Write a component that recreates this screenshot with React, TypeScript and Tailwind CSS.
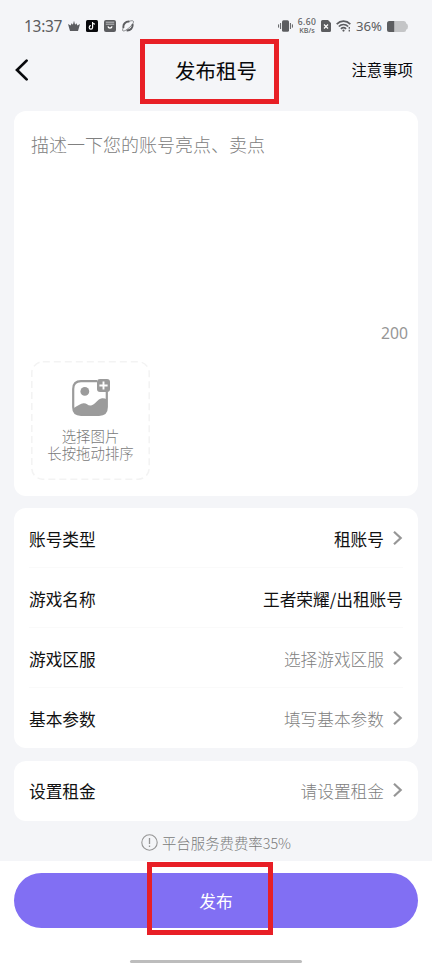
import { useState } from "react"

interface RowProps {
    label: string;
    value: string;
    filled?: boolean;
    arrow?: boolean;
    divider?: boolean;
}

function Chevron() {
    return (
        <svg className="-mt-[3px] ml-2 h-4 w-[11px] shrink-0" viewBox="0 0 11 16" fill="none" stroke="#969696" strokeWidth="2.2">
            <path d="M2 1.8 8.7 8 2 14.2" />
        </svg>
    )
}

function Row({ label, value, filled, arrow = true, divider }: RowProps) {
    return (
        <div className={`flex h-[60px] items-center justify-between text-[16.7px] ${divider ? "border-b border-[#fafafa] pt-[5px]" : "pt-[3px]"}`}>
            <span className="text-[#111111]">{label}</span>
            <div className="flex items-center">
                <span className={filled ? "text-[#111111]" : "font-light text-[#808080]"}>{value}</span>
                {arrow && <Chevron />}
            </div>
        </div>
    )
}

function StatusBar() {
    return (
        <div className="flex h-[39px] shrink-0 items-end justify-between pl-6 pr-[24px] text-[#5c5d60]">
            <div className="flex h-[26px] items-center">
                <span className="w-[38px] font-['Noto_Sans'] text-[15.5px] leading-[26px] tracking-[-0.3px]">13:37</span>
                {/* crown */}
                <svg className="ml-[6px] h-3 w-3" viewBox="0 0 12 12" fill="currentColor">
                    <path d="M2 11 0 4l2.6 1.6L3.6 3.200l1.300 1.600L6 .8l1.100 4 1.300-1.600 1 2.400L12 4l-2 7Z" />
                </svg>
                {/* music note */}
                <svg className="ml-[6px] h-3 w-3" viewBox="0 0 12 12">
                    <rect width="12" height="12" rx="1.5" fill="#08090c" />
                    <path d="M6.6 2v5.4a1.7 1.7 0 1 1-1.7-1.7M6.6 2c.2 1.4 1 2.1 2.4 2.2" fill="none" stroke="#fff" strokeWidth="1.2" />
                </svg>
                {/* shop bag */}
                <svg className="ml-[6px] h-3 w-3" viewBox="0 0 12 12">
                    <rect width="12" height="12" rx="2" fill="currentColor" />
                    <path d="M1.8 2.2h8.4M1.8 4.2h8.4" fill="none" stroke="#d5d6d9" strokeWidth=".8" />
                    <path d="M4 6.4c.4 2.2 3.6 2.2 4 0" fill="none" stroke="#fff" strokeWidth="1.3" />
                </svg>
                {/* planet */}
                <svg className="ml-[6px] h-3 w-3" viewBox="0 0 12 12" fill="none" stroke="currentColor">
                    <path d="M1.5 8C.7 4.2 3.6 1.3 7.4 1.6M10.5 4c.8 3.8-2.1 6.7-5.9 6.4" strokeWidth="1.9" />
                    <path d="M7.1 1.4C10 .2 12.1.6 11.4 2.5 10.7 4.5 8 7.3 4.900 9.500 2.100 11.500.2 11.300.6 9.700c.1-.6.4-1.200.8-1.800" strokeWidth=".7" />
                </svg>
            </div>
            <div className="flex h-[26px] items-center">
                {/* vibration */}
                <svg className="h-3 w-[15px]" viewBox="0 0 15 12" fill="none" stroke="currentColor">
                    <rect x="4" y=".3" width="7" height="11.4" rx="1.5" fill="currentColor" stroke="none" />
                    <path d="M2.6 3v6M.6 4.4v3.2M12.4 3v6M14.4 4.4v3.2" strokeWidth="1" />
                </svg>
                <div className="ml-1 flex w-[20px] flex-col items-center font-['Noto_Sans'] font-medium whitespace-nowrap">
                    <span className="text-[8.5px] leading-2 tracking-[0.4px]">6.60</span>
                    <span className="text-[7.2px] leading-2">KB/s</span>
                </div>
                {/* sim card */}
                <svg className="ml-1 h-3 w-[10px]" viewBox="0 0 10 12">
                    <path d="M1.5 0H7l3 3v7.5A1.5 1.5 0 0 1 8.5 12h-7A1.5 1.5 0 0 1 0 10.5v-9A1.5 1.5 0 0 1 1.5 0Z" fill="currentColor" />
                    <path d="m3 4.5 4 4m0-4-4 4" stroke="#fff" strokeWidth="1.2" />
                </svg>
                {/* wifi */}
                <svg className="ml-[5px] h-3 w-[15px]" viewBox="0 0 15 12" fill="none" stroke="currentColor" strokeWidth="1.7">
                    <path d="M.7 4.1c3.9-3.9 9.7-3.9 13.6 0M2.8 6.5c2.8-2.6 6.6-2.6 9.4 0M4.9 8.8c1.6-1.4 3.6-1.4 5.2 0" />
                    <circle cx="7.5" cy="10.6" r="1.1" fill="currentColor" stroke="none" />
                    <path d="M13.3 7v1.7M13.3 9.7v1.7" strokeWidth="1.3" />
                </svg>
                <span className="ml-[5px] w-[26px] font-['Noto_Sans'] text-[13.2px] leading-[26px]">36%</span>
                {/* battery */}
                <svg className="ml-[5px] h-[11px] w-[21px]" viewBox="0 0 21 11">
                    <path d="M2.5 0H17q2 0 2.3 2.5Q21 3 21 5.5t-1.7 3Q19 11 17 11H2.5Q0 11 0 8.5v-6Q0 0 2.5 0Z" fill="#c4c5c7" />
                    <path d="M2.5 0H7.2v11H2.5Q0 11 0 8.5v-6Q0 0 2.5 0Z" fill="currentColor" />
                </svg>
            </div>
        </div>
    )
}

function PictureIcon() {
    return (
        <svg className="h-[39px] w-[39px]" viewBox="0 0 39 39" fill="none">
            <path d="M26 3.2H10Q2.2 3.2 2.2 11v18q0 7.8 7.8 7.8h18q7.8 0 7.8-7.8V13" stroke="#9b9b9b" strokeWidth="2.2" />
            <path d="M2.2 30.500Q8.500 26 12.500 25.300c3-.3 4 2.500 7.500 2.200 3.800-.3 6.500-6.700 11-7.200q3-.2 4.800 1.200V29q0 7.800-7.800 7.800H10q-6.500 0-7.800-6.300Z" fill="#9b9b9b" />
            <circle cx="13.8" cy="13.4" r="4.4" fill="#9b9b9b" />
            <rect x="26" y="1" width="13" height="13" rx="3" fill="#9b9b9b" />
            <path d="M32.5 3.4v8.2M28.4 7.5h8.2" stroke="#fff" strokeWidth="1.9" />
        </svg>
    )
}

function App() {
    const [description, setDescription] = useState("")

    return (
        <div className="relative flex h-[964px] w-[432px] flex-col overflow-hidden bg-[#f4f5f8] font-['Noto_Sans_CJK_SC',sans-serif]">
            <StatusBar />
            <header className="grid h-[72px] shrink-0 grid-cols-3 items-start pt-[15px] pl-[15px] pr-[19px]">
                <button type="button" className="flex h-8 items-center" aria-label="返回">
                    <svg className="h-[22px] w-[14px]" viewBox="0 0 14 22" fill="none" stroke="#08090c" strokeWidth="2.7" strokeLinecap="round">
                        <path d="M11.6 1.6 2 11l9.6 9.4" />
                    </svg>
                </button>
                <h1 className="pl-1 text-center text-[20.5px] leading-8 text-[#08090c]">发布租号</h1>
                <span className="text-right text-[15.4px] leading-[31px] text-[#08090c]">注意事项</span>
            </header>

            <main className="min-h-0 flex-1 px-[14px]">
                <section className="mb-3 flex h-[385px] flex-col rounded-xl bg-white px-[17px] pb-4">
                    <textarea
                        value={description}
                        onChange={(e) => setDescription(e.target.value)}
                        placeholder="描述一下您的账号亮点、卖点"
                        className="mt-[19px] h-[189px] resize-none text-[18px] leading-7 font-light outline-none placeholder:text-[#808080]"
                    />
                    <span className="-mr-[7px] text-right font-['Noto_Sans'] text-[15.7px] leading-7 text-[#969696]">200</span>
                    <button type="button" className="relative mt-auto flex h-[119px] w-[119px] flex-col items-center pt-[17px] text-[14.4px] leading-[17px] font-light text-[#7a7a7a]">
                        <svg className="absolute inset-0 h-full w-full" viewBox="0 0 119 119" fill="none">
                            <rect x=".8" y=".8" width="117.4" height="117.4" rx="11" stroke="#f3f3f3" strokeWidth="1.5" strokeDasharray="7 4" />
                        </svg>
                        <PictureIcon />
                        <span className="mt-[10px]">选择图片</span>
                        <span>长按拖动排序</span>
                    </button>
                </section>

                <section className="mb-[12.5px] rounded-xl bg-white px-[15px]">
                    <Row label="账号类型" value="租账号" filled divider />
                    <Row label="游戏名称" value="王者荣耀/出租账号" filled arrow={false} divider />
                    <Row label="游戏区服" value="选择游戏区服" divider />
                    <Row label="基本参数" value="填写基本参数" />
                </section>

                <section className="rounded-xl bg-white px-[15px]">
                    <Row label="设置租金" value="请设置租金" />
                </section>

                <div className="flex h-10 items-center justify-center pt-1 text-[14.4px] font-light text-[#7a7a7a]">
                    <svg className="mr-1 h-[17px] w-[17px]" viewBox="0 0 17 17" fill="none" stroke="#969696" strokeWidth="1.1">
                        <circle cx="8.5" cy="8.5" r="7.7" />
                        <path d="M8.5 4v6M8.5 11.5v1.6" strokeWidth="1.3" />
                    </svg>
                    <span>平台服务费费率35%</span>
                </div>
            </main>

            <footer className="flex h-[103px] shrink-0 flex-col items-center bg-white px-[14px] pt-3">
                <button type="button" className="h-[55px] w-full rounded-full bg-[#816ff3] pt-[2px] text-[16.7px] text-white">发布</button>
                <div className="mt-8 h-[3px] w-[172px] rounded-full bg-[#bdbdbd]" />
            </footer>

            {/* highlighted steps */}
            <div className="pointer-events-none absolute left-[140px] top-[39px] h-[65px] w-[139px] border-5 border-[#e81f26]" />
            <div className="pointer-events-none absolute left-[147px] top-[862px] h-[73px] w-[126px] border-5 border-[#e81f26]" />
        </div>
    )
}

export default App
